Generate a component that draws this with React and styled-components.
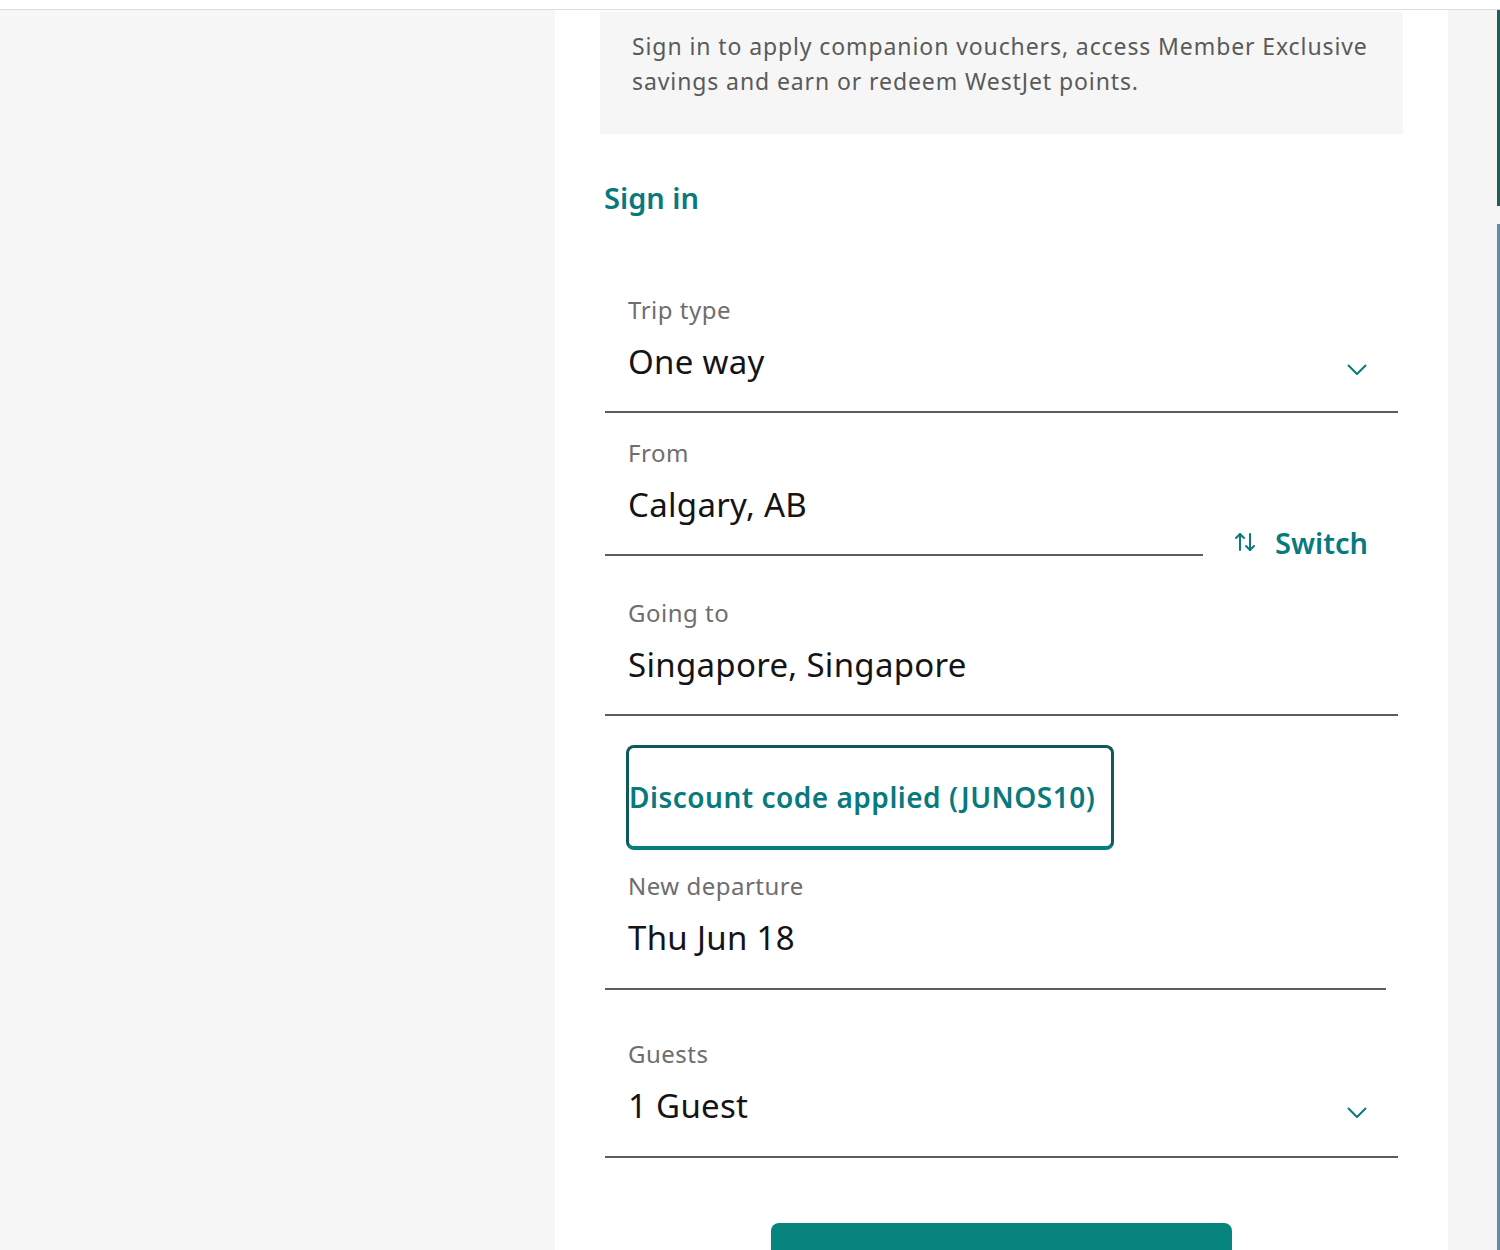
import React from 'react';
import styled, { createGlobalStyle } from 'styled-components';
import { ArrowUpDown } from 'lucide-react';

const GlobalStyle = createGlobalStyle`
  html, body { margin: 0; padding: 0; }
  body {
    background: #f7f7f7;
    font-family: "Noto Sans", "Open Sans", sans-serif;
    overflow: hidden;
  }
`;

const TEAL = '#08797d';

const TopBar = styled.div`
  height: 9px;
  background: #fff;
  border-bottom: 1px solid #dcdcdc;
`;

const Layout = styled.div`
  display: flex;
  min-height: 1240px;
`;

const Gutter = styled.div`
  width: 555px;
  flex: none;
  background: #f7f7f7;
`;

const Panel = styled.main`
  width: 803px;
  flex: none;
  background: #fff;
  padding: 2px 45px 0 45px;
`;

const RightGutter = styled.div`
  width: 49px;
  flex: none;
  background: #f5f5f5;
`;

const EdgeStrip = styled.div`
  width: 3px;
  flex: none;
  background: linear-gradient(
    to bottom,
    #1f5d5d 0, #1f5d5d 196px,
    #f5f5f5 196px, #f5f5f5 214px,
    #5d8fb0 214px, #5d8fb0 100%
  );
`;

const InfoBox = styled.div`
  background: #f6f6f6;
  padding: 17px 22px 35px 32px;
  font-size: 23px;
  letter-spacing: 0.9px;
  line-height: 35px;
  color: #5a5a5a;
`;

const SignInLink = styled.a`
  display: inline-block;
  margin: 45px 0 0 4px;
  font-size: 29px;
  line-height: 38px;
  font-weight: 600;
  color: ${TEAL};
  text-decoration: none;
`;

const Form = styled.div`
  margin: 53px 5px 0 5px;
  display: flex;
  flex-direction: column;
`;

const Field = styled.div`
  position: relative;
  padding: ${p => p.$top || 26}px 0 ${p => p.$bottom || 29}px 23px;
  border-bottom: 2px solid #5c5c5c;
  margin-right: ${p => p.$inset || 0}px;
  flex: ${p => (p.$grow ? 1 : 'none')};
`;

const Label = styled.div`
  font-size: 24px;
  letter-spacing: 0.5px;
  line-height: 28px;
  color: #6e6e6e;
`;

const Value = styled.div`
  margin-top: 18px;
  font-size: 33px;
  letter-spacing: 0.3px;
  line-height: 40px;
  color: #141414;
`;

const Chevron = styled.svg`
  position: absolute;
  right: 31px;
  bottom: ${p => p.$bottom}px;
  width: 20px;
  height: 12px;
`;

const FromRow = styled.div`
  display: flex;
  align-items: flex-end;
`;

const SwitchButton = styled.button`
  display: flex;
  align-items: center;
  gap: 18px;
  margin: 0 30px 0 30px;
  padding: 0;
  height: 24px;
  position: relative;
  top: -2px;
  border: none;
  background: none;
  font-family: inherit;
  font-size: 29px;
  font-weight: 600;
  color: ${TEAL};
  cursor: pointer;
`;

const DiscountBox = styled.div`
  align-self: flex-start;
  margin: 29px 0 0 21px;
  width: 482px;
  height: 98px;
  display: flex;
  align-items: center;
  border: 3px solid #0e5a5a;
  border-bottom: 4px solid #06807a;
  border-radius: 8px;
  font-size: 28px;
  letter-spacing: 0.5px;
  font-weight: 600;
  color: ${TEAL};
  white-space: nowrap;
`;

const ButtonRow = styled.div`
  display: flex;
  justify-content: center;
  margin-top: 65px;
`;

const SearchButton = styled.button`
  width: 461px;
  height: 60px;
  border: none;
  border-radius: 8px;
  background: #05837c;
`;

function ChevronDown({ bottom }) {
  return (
    <Chevron $bottom={bottom} viewBox="0 0 20 12" fill="none">
      <path d="M1.5 1.5 L10 10 L18.5 1.5" stroke={TEAL} strokeWidth="2" strokeLinecap="round" strokeLinejoin="round" />
    </Chevron>
  );
}

export default function App() {
  return (
    <>
      <GlobalStyle />
      <TopBar />
      <Layout>
        <Gutter />
        <Panel>
          <InfoBox>
            Sign in to apply companion vouchers, access Member Exclusive savings and earn or redeem WestJet points.
          </InfoBox>
          <SignInLink href="#">Sign in</SignInLink>
          <Form>
            <Field>
              <Label>Trip type</Label>
              <Value>One way</Value>
              <ChevronDown bottom={35} />
            </Field>
            <FromRow>
              <Field $grow>
                <Label>From</Label>
                <Value>Calgary, AB</Value>
              </Field>
              <SwitchButton>
                <ArrowUpDown size={24} strokeWidth={2} />
                Switch
              </SwitchButton>
            </FromRow>
            <Field $top={43}>
              <Label>Going to</Label>
              <Value>Singapore, Singapore</Value>
            </Field>
            <DiscountBox>Discount code applied (JUNOS10)</DiscountBox>
            <Field $top={22} $bottom={30} $inset={12}>
              <Label>New departure</Label>
              <Value>Thu Jun 18</Value>
            </Field>
            <Field $top={50} $bottom={30}>
              <Label>Guests</Label>
              <Value>1 Guest</Value>
              <ChevronDown bottom={37} />
            </Field>
          </Form>
          <ButtonRow>
            <SearchButton aria-label="Search flights" />
          </ButtonRow>
        </Panel>
        <RightGutter />
        <EdgeStrip />
      </Layout>
    </>
  );
}
